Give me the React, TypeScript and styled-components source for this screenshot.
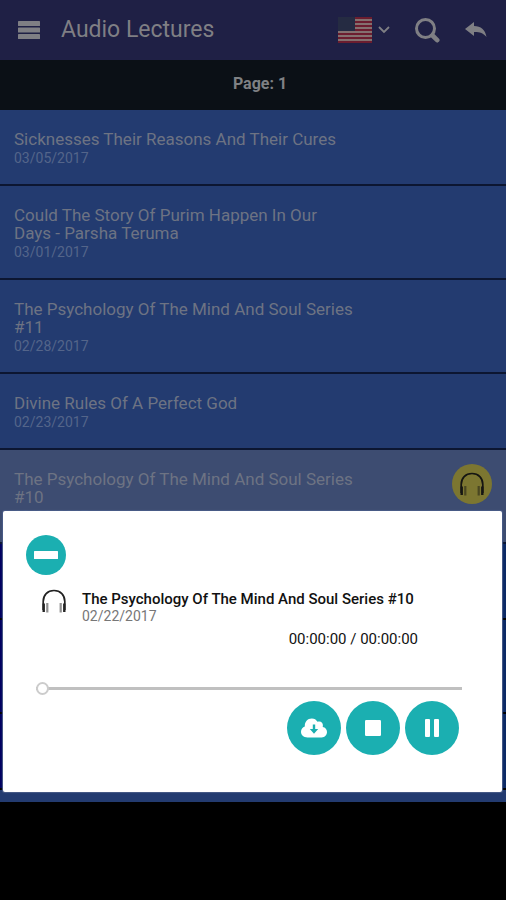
import React from "react";
import styled, { createGlobalStyle } from "styled-components";

const GlobalStyle = createGlobalStyle`
  *, *::before, *::after { box-sizing: border-box; }
  body { margin: 0; background: #000; font-family: Roboto, "Liberation Sans", sans-serif; }
  h1, h2, p, ul { margin: 0; padding: 0; }
  button { padding: 0; border: 0; background: none; font: inherit; color: inherit; cursor: pointer; }
`;

const Screen = styled.div`
  position: relative;
  background: #233b70;
`;

const Toolbar = styled.header`
  display: flex;
  align-items: center;
  height: 60px;
  padding: 0 19px 0 18px;
  background: #1f2045;
  color: #7f7f84;
`;

const ToolButton = styled.button<{ $gap?: number }>`
  display: flex;
  align-items: center;
  gap: 6px;
  margin-left: ${(p) => p.$gap ?? 0}px;
`;

const Heading = styled.h1`
  flex: 1;
  margin-left: 21px;
  font-size: 23px;
  line-height: 32px;
  font-weight: 400;
`;

const PageBar = styled.div`
  height: 50px;
  padding-left: 14px;
  background: #0b1016;
  color: #7f8184;
  font-size: 16px;
  line-height: 48px;
  font-weight: 700;
  text-align: center;
`;

const LectureList = styled.ul`
  list-style: none;
  padding-bottom: 12px;
`;

const LectureRow = styled.li<{ $selected?: boolean }>`
  display: flex;
  align-items: flex-start;
  justify-content: space-between;
  padding: 20px 14px 16px;
  border-bottom: 2px solid #0c1631;
  background: ${(p) => (p.$selected ? "#3d4c71" : "#233b70")};
`;

const LectureText = styled.div`
  width: 342px;
`;

const LectureTitle = styled.h2`
  font-size: 17px;
  line-height: 18px;
  font-weight: 400;
  color: #6d7383;
`;

const LectureDate = styled.p`
  font-size: 14px;
  line-height: 20px;
  color: #54658a;
`;

const NowPlaying = styled.span`
  display: flex;
  align-items: center;
  justify-content: center;
  width: 40px;
  height: 40px;
  margin-top: -6px;
  border-radius: 50%;
  background: #7c7631;
  color: #151512;
`;

const HiddenRow = styled.li<{ $height: number }>`
  height: ${(p) => p.$height}px;
  border-bottom: 2px solid #000;
  background: linear-gradient(90deg, #000060 50%, #0c2a66 50%);
`;

const Player = styled.section`
  position: absolute;
  left: 3px;
  right: 4px;
  bottom: 10px;
  padding: 24px 40px 37px 23px;
  border-radius: 2px;
  background: #fff;
  box-shadow: 0 0 1px 1px #4a5c88;
`;

const RoundButton = styled.button<{ $size: number }>`
  display: flex;
  align-items: center;
  justify-content: center;
  width: ${(p) => p.$size}px;
  height: ${(p) => p.$size}px;
  border-radius: 50%;
  background: #1bafb1;
  color: #fff;
`;

const Track = styled.div`
  display: flex;
  align-items: flex-start;
  gap: 16px;
  margin: 14px 0 0 16px;
  color: #222;
`;

const TrackTitle = styled.h2`
  font-size: 15px;
  line-height: 20px;
  font-weight: 500;
  color: #111;
`;

const TrackDate = styled.p`
  font-size: 14px;
  line-height: 14px;
  color: #777;
`;

const Time = styled.p`
  margin-right: 44px;
  font-size: 15px;
  line-height: 32px;
  text-align: right;
  color: #111;
`;

const Seek = styled.input`
  appearance: none;
  display: block;
  width: calc(100% - 10px);
  height: 14px;
  margin: 26px 0 6px 10px;
  background: linear-gradient(#c0c0c0, #c0c0c0) center / 100% 3px no-repeat;
  &::-webkit-slider-thumb {
    appearance: none;
    width: 13px;
    height: 13px;
    border: 2px solid #ccc;
    border-radius: 50%;
    background: #fff;
  }
`;

const Controls = styled.div`
  display: flex;
  justify-content: flex-end;
  gap: 5px;
  margin-right: 3px;
`;

const MenuIcon = () => (
  <svg width="22" height="18" viewBox="0 0 22 18" fill="currentColor" aria-hidden="true">
    <rect width="22" height="5" y="0" rx="0.6" />
    <rect width="22" height="5" y="6.5" rx="0.6" />
    <rect width="22" height="5" y="13" rx="0.6" />
  </svg>
);

const FlagIcon = () => (
  <svg width="34" height="26" viewBox="0 0 34 26" aria-hidden="true">
    <rect width="34" height="26" fill="#84706f" />
    {[0, 4, 8, 12, 16, 20, 24].map((y) => (
      <rect key={y} y={y} width="34" height="2" fill="#6c1d2f" />
    ))}
    <rect width="17" height="14" fill="#252b42" />
  </svg>
);

const ChevronIcon = () => (
  <svg width="12" height="8" viewBox="0 0 12 8" fill="none" stroke="currentColor" strokeWidth="1.8" aria-hidden="true">
    <path d="M1 1l5 5 5-5" />
  </svg>
);

const SearchIcon = () => (
  <svg width="25" height="25" viewBox="0 0 25 25" fill="none" stroke="currentColor" aria-hidden="true">
    <circle cx="10.5" cy="10.5" r="9" strokeWidth="3" />
    <path d="M17.5 17.5l4.7 4.7" strokeWidth="4.6" strokeLinecap="round" />
  </svg>
);

const ReplyIcon = () => (
  <svg width="22" height="16" viewBox="0 0 22 16" fill="currentColor" aria-hidden="true">
    <path d="M0 7L9 0v4c7 0 11 3.500 12.500 11C18.500 11 14 9.800 9 10v4z" />
  </svg>
);

const HeadphonesIcon = () => (
  <svg width="24" height="24" viewBox="0 0 24 24" fill="none" stroke="currentColor" aria-hidden="true">
    <path d="M1.200 21v-8.500C1.200 6 5.500 1.500 12 1.500S22.800 6 22.800 12.500V21" strokeWidth="1.700" />
    <path d="M1.700 14.500v8.500M22.300 14.500v8.500" strokeWidth="2.400" />
    <path d="M5.300 14v9.500M18.700 14v9.500" strokeWidth="2.200" opacity="0.5" />
  </svg>
);

const MinusIcon = () => (
  <svg width="24" height="8" viewBox="0 0 24 8" fill="currentColor" aria-hidden="true">
    <rect width="24" height="8" rx="0.5" />
  </svg>
);

const CloudDownloadIcon = () => (
  <svg width="26" height="20" viewBox="0 0 26 20" aria-hidden="true">
    <path
      fill="currentColor"
      d="M6.500 19.500C2.500 19.500 0 17 0 13.800c0-2.600 1.600-4.500 3.800-5.300C3.500 4 6.500 0.500 10.800 0.500c2.600 0 4.500 1.200 5.700 3.300 2.800-1.300 5.700 0.500 5.400 3.900l-0.200 1.300c2.700 0.400 4.300 2.600 4.300 5.100 0 3-2.200 5.400-5.300 5.400z"
    />
    <path fill="#1bafb1" d="M11.800 6.500h2.400V11h3L13 15.800 8.800 11h3z" />
  </svg>
);

const StopIcon = () => (
  <svg width="16" height="16" viewBox="0 0 16 16" fill="currentColor" aria-hidden="true">
    <rect width="16" height="16" rx="1.2" />
  </svg>
);

const PauseIcon = () => (
  <svg width="14" height="18" viewBox="0 0 14 18" fill="currentColor" aria-hidden="true">
    <rect width="5" height="18" rx="1" />
    <rect x="9" width="5" height="18" rx="1" />
  </svg>
);

const lectures = [
  { title: "Sicknesses Their Reasons And Their Cures", date: "03/05/2017" },
  { title: "Could The Story Of Purim Happen In Our Days - Parsha Teruma", date: "03/01/2017" },
  { title: "The Psychology Of The Mind And Soul Series #11", date: "02/28/2017" },
  { title: "Divine Rules Of A Perfect God", date: "02/23/2017" },
  { title: "The Psychology Of The Mind And Soul Series #10", date: "02/22/2017", selected: true },
];

export default function App() {
  return (
    <>
      <GlobalStyle />
      <Screen>
        <Toolbar>
          <ToolButton aria-label="Menu"><MenuIcon /></ToolButton>
          <Heading>Audio Lectures</Heading>
          <ToolButton aria-label="Language"><FlagIcon /><ChevronIcon /></ToolButton>
          <ToolButton aria-label="Search" $gap={25}><SearchIcon /></ToolButton>
          <ToolButton aria-label="Back" $gap={25}><ReplyIcon /></ToolButton>
        </Toolbar>
        <PageBar>Page: 1</PageBar>
        <LectureList>
          {lectures.map((l) => (
            <LectureRow key={l.title} $selected={l.selected}>
              <LectureText>
                <LectureTitle>{l.title}</LectureTitle>
                <LectureDate>{l.date}</LectureDate>
              </LectureText>
              {l.selected && <NowPlaying><HeadphonesIcon /></NowPlaying>}
            </LectureRow>
          ))}
          {[76, 94, 76].map((h, i) => (
            <HiddenRow key={i} $height={h} />
          ))}
        </LectureList>
        <Player aria-label="Player">
          <RoundButton $size={40} aria-label="Minimize"><MinusIcon /></RoundButton>
          <Track>
            <HeadphonesIcon />
            <div>
              <TrackTitle>The Psychology Of The Mind And Soul Series #10</TrackTitle>
              <TrackDate>02/22/2017</TrackDate>
            </div>
          </Track>
          <Time>00:00:00 / 00:00:00</Time>
          <Seek type="range" min="0" max="100" defaultValue="0" aria-label="Position" />
          <Controls>
            <RoundButton $size={54} aria-label="Download"><CloudDownloadIcon /></RoundButton>
            <RoundButton $size={54} aria-label="Stop"><StopIcon /></RoundButton>
            <RoundButton $size={54} aria-label="Pause"><PauseIcon /></RoundButton>
          </Controls>
        </Player>
      </Screen>
    </>
  );
}
